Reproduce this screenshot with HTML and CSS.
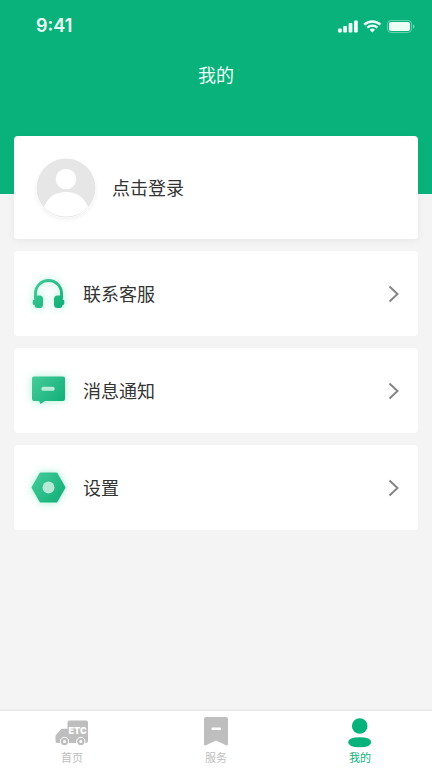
FILE: index.html
```html
<!DOCTYPE html>
<html lang="zh-CN">
<head>
<meta charset="utf-8">
<meta name="viewport" content="width=device-width, initial-scale=1">
<title>我的</title>
<link rel="stylesheet" href="styles.css">
</head>
<body>
<header class="hero">
  <div class="status">
    <span class="time">9:41</span>
    <svg class="signals" width="80" height="16" viewBox="0 0 80 16" aria-hidden="true">
      <g fill="currentColor">
        <rect x="2" y="10.500" width="3.800" height="4" rx="1"/>
        <rect x="7.200" y="8" width="3.800" height="6.500" rx="1"/>
        <rect x="12.600" y="5" width="3.800" height="9.500" rx="1"/>
        <rect x="18" y="2.500" width="3.800" height="12" rx="1"/>
        <path d="M36.300 14.500l-2.700-2.800a4 4 0 0 1 5.400 0z"/>
        <rect x="53" y="4" width="21" height="9" rx="2"/>
        <path d="M77 6.500v4q1.500-.5 1.500-2t-1.500-2z" opacity=".5"/>
      </g>
      <g fill="none" stroke="currentColor">
        <path d="M28.200 6.700a11.700 11.700 0 0 1 16.200 0" stroke-width="2.500"/>
        <path d="M31.200 9.700a7.400 7.400 0 0 1 10.200 0" stroke-width="2.300"/>
        <rect x="51.500" y="2.500" width="24" height="12" rx="3.500" opacity=".4"/>
      </g>
    </svg>
  </div>
  <h1 class="title">我的</h1>
</header>
<main class="content">
  <button class="card profile" type="button">
    <svg class="avatar" width="60" height="60" viewBox="0 0 60 60" aria-hidden="true">
      <circle cx="30" cy="30" r="29.500" fill="#e6e6e6"/>
      <circle cx="30" cy="21" r="10.300" fill="#fff"/>
      <path fill="#fff" d="M8 49Q14 34 30 34T52 49Q43 58.500 30 58.500T8 49z"/>
    </svg>
    <span class="label">点击登录</span>
  </button>
  <button class="card row" type="button">
    <svg class="icon" width="49" height="49" viewBox="0 0 49 49" aria-hidden="true">
      <defs>
        <linearGradient id="mint" x1="10" y1="12" x2="40" y2="38" gradientUnits="userSpaceOnUse">
          <stop offset="0" stop-color="#43ca98"/><stop offset="1" stop-color="#10ae78"/>
        </linearGradient>
      </defs>
      <path d="M11.500 30V24.500a13 13 0 0 1 26 0V30" fill="none" stroke="url(#mint)" stroke-width="2.800"/>
      <path fill="url(#mint)" d="M10.500 26.500h5q3.500 0 3.500 3.500v5.500q0 3.500-3.500 3.500h-2q-3 0-3-3-1.800 0-1.800-1.500v-2.500q0-1.500 1.800-1.500zM38.500 26.500h-5q-3.500 0-3.500 3.500v5.500q0 3.500 3.500 3.500h2q3 0 3-3 1.800 0 1.800-1.500v-2.500q0-1.500-1.800-1.500z"/>
    </svg>
    <span class="label">联系客服</span>
    <svg class="chevron" width="12" height="18" viewBox="0 0 12 18" aria-hidden="true"><path d="M1.500 1.500l8 7.500-8 7.500"/></svg>
  </button>
  <button class="card row" type="button">
    <svg class="icon" width="49" height="49" viewBox="0 0 49 49" aria-hidden="true">
      <path fill="url(#mint)" d="M10 10.500h29q2 0 2 2v20.500q0 2-2 2H21l-4.500 3-1.500-3H10q-2 0-2-2v-20.500q0-2 2-2z"/>
      <rect x="17.500" y="20.700" width="13" height="4" rx="1.500" fill="#b9ecd8"/>
    </svg>
    <span class="label">消息通知</span>
    <svg class="chevron" width="12" height="18" viewBox="0 0 12 18" aria-hidden="true"><path d="M1.500 1.500l8 7.500-8 7.500"/></svg>
  </button>
  <button class="card row" type="button">
    <svg class="icon" width="49" height="49" viewBox="0 0 49 49" aria-hidden="true">
      <path fill="url(#mint)" stroke="url(#mint)" stroke-width="2" stroke-linejoin="round" d="M16.500 10.500h16l8 14-8 14h-16l-8-14z"/>
      <circle cx="24.500" cy="24.500" r="6" fill="#b4ead5"/>
    </svg>
    <span class="label">设置</span>
    <svg class="chevron" width="12" height="18" viewBox="0 0 12 18" aria-hidden="true"><path d="M1.500 1.500l8 7.500-8 7.500"/></svg>
  </button>
</main>
<nav class="tabs">
  <a class="tab" href="#home">
    <svg width="34" height="32" viewBox="0 0 34 32" aria-hidden="true">
      <path fill="currentColor" d="M14.500 4.500h16.500q2 0 2 2v18.500q0 2-2 2H2.500Q.5 27 .5 25v-5.500l5-5.500Q6.500 12.800 8 12.800h4.500V6.500Q12.500 4.500 14.500 4.500z"/>
      <g fill="currentColor" stroke="#fff"><circle cx="9.500" cy="25.500" r="4.200"/><circle cx="25.800" cy="25.500" r="4.200"/></g>
      <g fill="#fff"><circle cx="9.500" cy="25.500" r="1.500"/><circle cx="25.800" cy="25.500" r="1.500"/></g>
      <text class="etc" x="13.500" y="18">ETC</text>
    </svg>
    <span>首页</span>
  </a>
  <a class="tab" href="#service">
    <svg width="34" height="32" viewBox="0 0 34 32" aria-hidden="true">
      <path fill="currentColor" d="M7 1h20q2 0 2 2v25q0 2-2 1.200L17 24.500 7 29.200Q5 30 5 28V3q0-2 2-2z"/>
      <rect x="12.500" y="11.500" width="9.500" height="2.500" rx="1" fill="#fff"/>
    </svg>
    <span>服务</span>
  </a>
  <a class="tab active" href="#me" aria-current="page">
    <svg width="34" height="32" viewBox="0 0 34 32" aria-hidden="true">
      <circle cx="16.700" cy="10" r="7.800" fill="currentColor"/>
      <path fill="currentColor" d="M5.200 26.300q0-5 11.500-5t11.500 5-11.500 5-11.500-5z"/>
    </svg>
    <span>我的</span>
  </a>
</nav>
</body>
</html>
```
FILE: styles.css
```css
* { box-sizing: border-box; }

body {
  margin: 0;
  min-height: 100vh;
  display: flex;
  flex-direction: column;
  background: #f4f4f5;
  color: #333;
  font-family: "Noto Sans CJK SC", sans-serif;
}

.hero {
  height: 194px;
  padding: 16px 16px 0 36px;
  background: #0ab27b;
  color: #ecfff7;
}

.status {
  display: flex;
  justify-content: space-between;
  align-items: center;
  height: 20px;
}

.time {
  font: 600 18px/20px Inter, sans-serif;
}

.title {
  margin: 25px 20px 0 0;
  font-size: 18px;
  line-height: 26px;
  font-weight: 400;
  text-align: center;
}

.content {
  flex: 1;
  display: flex;
  flex-direction: column;
  gap: 12px;
  margin-top: -58px;
  padding: 0 14px 24px;
}

.card {
  display: flex;
  align-items: center;
  width: 100%;
  border: 0;
  border-radius: 4px;
  background: #fff;
  color: inherit;
  font: inherit;
  font-size: 18px;
  line-height: 26px;
  text-align: left;
}

.profile {
  gap: 16px;
  height: 103px;
  padding: 0 22px;
  box-shadow: 0 2px 8px rgb(0 0 0 / 5%);
}

.avatar {
  border-radius: 50%;
  box-shadow: 0 2px 4px rgb(0 0 0 / 6%);
}

.row {
  gap: 10px;
  height: 85px;
  padding: 0 18px 0 10px;
}

.icon { filter: drop-shadow(0 0 4px rgb(60 220 160 / 45%)); }

.label {
  flex: 1;
  padding-bottom: 2px;
}

.chevron {
  fill: none;
  stroke: #858585;
  stroke-width: 2;
}

.tabs {
  display: flex;
  border-top: 2px solid #ebebeb;
  background: #fff;
}

.tab {
  flex: 1;
  display: flex;
  flex-direction: column;
  align-items: center;
  padding: 5px 0 2px;
  color: #bebebe;
  font-size: 11px;
  line-height: 18px;
  text-decoration: none;
}

.active { color: #0ab27b; }

.etc {
  fill: #fff;
  font: 900 9px Inter, sans-serif;
}
```
